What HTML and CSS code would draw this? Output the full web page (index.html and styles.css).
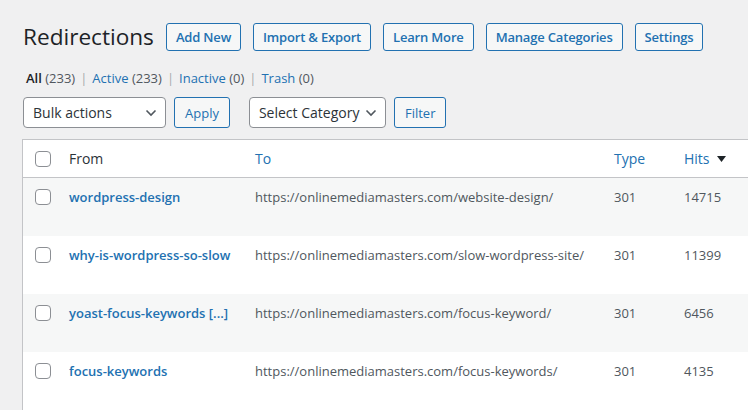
FILE: index.html
```html
<!DOCTYPE html>
<html>
<head>
<meta charset="utf-8">
<link rel="stylesheet" href="styles.css">
</head>
<body>
<div class="wrap">
  <div class="heading">
    <h1 class="title">Redirections</h1>
    <a class="btn">Add New</a>
    <a class="btn">Import &amp; Export</a>
    <a class="btn">Learn More</a>
    <a class="btn">Manage Categories</a>
    <a class="btn">Settings</a>
  </div>
  <ul class="subsubsub">
    <li><a class="current">All</a> <span class="count">(233)</span></li>
    <li class="sep">|</li>
    <li><a>Active</a> <span class="count">(233)</span></li>
    <li class="sep">|</li>
    <li><a>Inactive</a> <span class="count">(0)</span></li>
    <li class="sep">|</li>
    <li><a>Trash</a> <span class="count">(0)</span></li>
  </ul>
  <div class="tablenav">
    <div class="select select-bulk"><span>Bulk actions</span><svg width="12" height="8" viewBox="0 0 12 8"><path d="M1.5 1.5 L6 6 L10.5 1.5" fill="none" stroke="#50575e" stroke-width="1.6"/></svg></div>
    <a class="btn btn-small">Apply</a>
    <div class="select select-cat"><span>Select Category</span><svg width="12" height="8" viewBox="0 0 12 8"><path d="M1.5 1.5 L6 6 L10.5 1.5" fill="none" stroke="#50575e" stroke-width="1.6"/></svg></div>
    <a class="btn btn-small">Filter</a>
  </div>
  <div class="list">
    <div class="row head">
      <div class="cell col-cb"><span class="cb"></span></div>
      <div class="cell">From</div>
      <div class="cell"><a>To</a></div>
      <div class="cell"><a>Type</a></div>
      <div class="cell"><a>Hits</a><svg class="sort" width="9" height="6" viewBox="0 0 9 6"><path d="M0 0 H9 L4.5 6 Z" fill="#1d2327"/></svg></div>
    </div>
    <div class="row alt">
      <div class="cell col-cb"><span class="cb"></span></div>
      <div class="cell"><a class="src">wordpress-design</a></div>
      <div class="cell">https://onlinemediamasters.com/website-design/</div>
      <div class="cell">301</div>
      <div class="cell">14715</div>
    </div>
    <div class="row">
      <div class="cell col-cb"><span class="cb"></span></div>
      <div class="cell"><a class="src">why-is-wordpress-so-slow</a></div>
      <div class="cell">https://onlinemediamasters.com/slow-wordpress-site/</div>
      <div class="cell">301</div>
      <div class="cell">11399</div>
    </div>
    <div class="row alt">
      <div class="cell col-cb"><span class="cb"></span></div>
      <div class="cell"><a class="src">yoast-focus-keywords [...]</a></div>
      <div class="cell">https://onlinemediamasters.com/focus-keyword/</div>
      <div class="cell">301</div>
      <div class="cell">6456</div>
    </div>
    <div class="row">
      <div class="cell col-cb"><span class="cb"></span></div>
      <div class="cell"><a class="src">focus-keywords</a></div>
      <div class="cell">https://onlinemediamasters.com/focus-keywords/</div>
      <div class="cell">301</div>
      <div class="cell">4135</div>
    </div>
  </div>
</div>
</body>
</html>
```
FILE: styles.css
```css
html, body {
  margin: 0;
  padding: 0;
  background: #f0f0f1;
  overflow: hidden;
}
body {
  font-family: "Open Sans", "Noto Sans", sans-serif;
  color: #2c3338;
  font-size: 13px;
}
a { color: #2271b1; text-decoration: none; }

.wrap {
  padding: 23px 0 0 22px;
  width: 780px;
}

.heading {
  display: flex;
  align-items: center;
  gap: 12px;
  height: 28px;
}
.title {
  margin: 0 0 0 1px;
  font-size: 22.6px;
  font-weight: 400;
  color: #1d2327;
  line-height: 28px;
}
.btn {
  display: inline-flex;
  align-items: center;
  box-sizing: border-box;
  height: 28px;
  padding: 0 9px;
  border: 1px solid #2271b1;
  border-radius: 3px;
  background: #f6f7f7;
  color: #2271b1;
  font-size: 13px;
  font-weight: 600;
  white-space: nowrap;
}
.heading .btn { letter-spacing: -0.18px; }

.subsubsub {
  list-style: none;
  margin: 0;
  padding: 0 0 0 4px;
  display: flex;
  gap: 5px;
  height: 20px;
  margin-top: 17px;
  line-height: 20px;
  font-size: 13px;
  color: #50575e;
}
.subsubsub .current { color: #1d2327; font-weight: 600; }
.subsubsub .sep { color: #a7aaad; }

.tablenav {
  display: flex;
  align-items: center;
  margin-top: 9px;
  height: 31px;
}
.select {
  box-sizing: border-box;
  height: 31px;
  display: flex;
  align-items: center;
  justify-content: space-between;
  padding: 0 8px 0 9px;
  border: 1px solid #8c8f94;
  border-radius: 4px;
  background: #fff;
  color: #2c3338;
  font-size: 14px;
}
.select-bulk { width: 143px; margin-left: 1px; }
.select-cat { width: 137px; margin-left: 19px; }
.btn-small {
  height: 31px;
  font-weight: 400;
  font-size: 13px;
  padding: 0 10px;
  margin-left: 8px;
}

.list {
  margin-top: 11px;
  background: #fff;
  border: 1px solid #c3c4c7;
  width: 760px;
}
.row {
  display: grid;
  grid-template-columns: 36px 186px 359px 70px 1fr;
  height: 58px;
  font-size: 13px;
  line-height: 20px;
  color: #50575e;
}
.row.alt { background: #f6f7f7; }
.cell {
  padding: 9px 10px 0;
  white-space: nowrap;
}
.row.head {
  height: 37px;
  border-bottom: 1px solid #c3c4c7;
  font-size: 14px;
  color: #2c3338;
  align-items: center;
}
.row.head .cell { padding-top: 0; }
.cell.col-cb { padding: 0 0 0 12px; }
.row:not(.head) .col-cb { padding-top: 11px; }
.src { font-weight: 600; }
.cb {
  display: block;
  box-sizing: border-box;
  width: 16px;
  height: 16px;
  border: 1px solid #8c8f94;
  border-radius: 4px;
  background: #fff;
}
.sort { margin-left: 7px; vertical-align: 2px; }
```
